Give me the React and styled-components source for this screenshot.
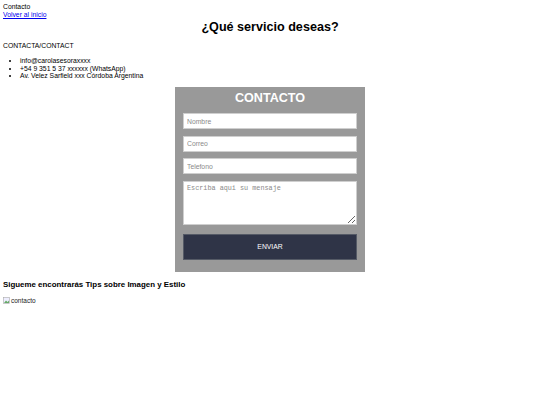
import React from 'react'
import styled, { createGlobalStyle } from 'styled-components'

const GlobalStyle = createGlobalStyle`
    body {
        margin: 3px;
        font-family: "Liberation Sans", Arial, sans-serif;
        font-size: 6.8px;
        color: #000;
        background: #fff;
    }
`

const Top = styled.div`
    line-height: 8px;
`

const BackLink = styled.a`
    color: #0000ee;
    text-decoration: underline;
`

const Title = styled.h2`
    margin: 1px 0 8px;
    text-align: center;
    font-size: 12.6px;
    line-height: 14px;
    font-weight: 700;
`

const Label = styled.p`
    margin: 0 0 7px;
    line-height: 8px;
`

const Info = styled.ul`
    margin: 0 0 7px;
    padding-left: 17px;
    line-height: 7.5px;
`

const FormBox = styled.form`
    width: 174px;
    margin: 0 auto;
    padding: 4px 8px 12px;
    background: #999999;
    display: flex;
    flex-direction: column;
    gap: 6.5px;
`

const FormTitle = styled.h3`
    margin: 0 0 2px;
    color: #fff;
    text-align: center;
    font-size: 12.6px;
    font-weight: 700;
    line-height: 14px;
`

const Field = styled.input`
    box-sizing: border-box;
    width: 100%;
    height: 16px;
    padding: 0 3px;
    border: 1px solid #cfcfcf;
    background: #fff;
    font-family: "Liberation Sans", Arial, sans-serif;
    font-size: 6.8px;
    &::placeholder { color: #8a8a8a; }
`

const Message = styled.textarea`
    box-sizing: border-box;
    width: 100%;
    height: 44px;
    padding: 2px 3px;
    border: 1px solid #cfcfcf;
    background: #fff;
    font-family: "Liberation Mono", "Courier New", monospace;
    font-size: 6.8px;
    resize: vertical;
    &::placeholder { color: #8a8a8a; }
`

const Send = styled.button`
    margin-top: 2.5px;
    height: 26px;
    border: 1px solid #555a66;
    background: #2f3447;
    color: #fff;
    font-family: "Liberation Sans", Arial, sans-serif;
    font-size: 6.8px;
`

const Follow = styled.h4`
    margin: 8px 0 8px;
    font-size: 7.9px;
    line-height: 9px;
    font-weight: 700;
`

const Broken = styled.div`
    display: flex;
    align-items: center;
    gap: 1px;
    font-size: 6.5px;
    color: #222;
`

export default function App() {
    return (
        <>
            <GlobalStyle />
            <Top>
                <div>Contacto</div>
                <BackLink href="#">Volver al inicio</BackLink>
            </Top>
            <Title>¿Qué servicio deseas?</Title>
            <Label>CONTACTA/CONTACT</Label>
            <Info>
                <li>info@carolasesoraxxxx</li>
                <li>+54 9 351 5 37 xxxxxx (WhatsApp)</li>
                <li>Av. Velez Sarfield xxx Córdoba Argentina</li>
            </Info>
            <FormBox onSubmit={e => e.preventDefault()}>
                <FormTitle>CONTACTO</FormTitle>
                <Field placeholder="Nombre" />
                <Field placeholder="Correo" />
                <Field placeholder="Telefono" />
                <Message placeholder="Escriba aqui su mensaje" />
                <Send type="submit">ENVIAR</Send>
            </FormBox>
            <Follow>Sigueme encontrarás Tips sobre Imagen y Estilo</Follow>
            <Broken>
                <svg width="7" height="7" viewBox="0 0 7 7">
                    <rect x="0.5" y="0.5" width="6" height="6" fill="#eef" stroke="#aaa" strokeWidth="0.6" />
                    <path d="M1 6 L3 3.5 L4.5 5 L6 3.5 L6 6 Z" fill="#6a6" />
                </svg>
                contacto
            </Broken>
        </>
    )
}
